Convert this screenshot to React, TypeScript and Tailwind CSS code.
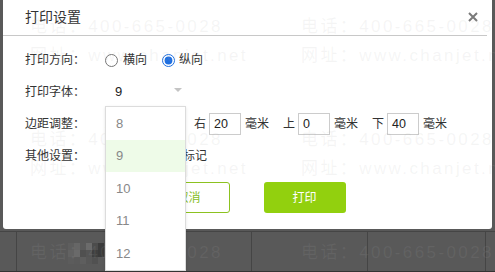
import React from "react";

const FONT = { fontFamily: '"Liberation Sans", "Noto Sans CJK SC", sans-serif' };

const mosaic = [
  ["#5e5e5e", "#666666", "#5a5a5a", "#6b6b6b", "#4c4c4c", "#3c3c3c"],
  ["#626262", "#6a6a6a", "#505050", "#555555", "#3f3f3f", "#3a3a3a"],
  ["#5c5c5c", "#5a5a5a", "#5e5e5e", "#575757", "#515151", "#5a5a5a"],
];

function Watermark() {
  const rows = [0, 1, 2];
  const cols = [0, 1];
  return (
    <div className="pointer-events-none absolute inset-0 flex flex-col gap-[58px] pt-[14px] pl-[30px] text-[17px] tracking-[2.4px] text-[rgba(171,171,171,0.12)] leading-[26px]" style={FONT}>
      {rows.map((r) => (
        <div key={r} className="flex gap-[66px]">
          {cols.map((c) => (
            <div key={c} className="flex w-[205px] shrink-0 flex-col gap-[3px] whitespace-nowrap">
              <span>电话：400-665-0028</span>
              <span>网址：www.chanjet.net</span>
            </div>
          ))}
        </div>
      ))}
    </div>
  );
}

function MarginInput({ label, value }: { label: string; value: string }) {
  return (
    <div className="flex items-center">
      <span>{label}</span>
      <div className="ml-[3px] flex h-[22px] w-[32px] items-center border border-[#cccccc] pl-[4px] text-[12.5px] text-[#222]">
        {value}
      </div>
      <span className="ml-[4px]">毫米</span>
    </div>
  );
}

export default function App() {
  return (
    <div className="relative flex h-[272px] w-[495px] flex-col overflow-hidden border-b border-[#333] bg-[#595959]" style={FONT}>
      <div className="relative ml-[3px] mr-[3px] h-[229px] shrink-0 rounded-b-[3px] bg-white text-[12px] text-[#333]">
        <div className="mr-[5px] flex h-[36px] items-center justify-between border-b border-[#c8c8c8] pl-[22px] pr-[9px]">
          <span className="text-[14px] text-[#333]">打印设置</span>
          <svg width="10" height="10" viewBox="0 0 10 10" className="mb-[1px]">
            <path d="M1 1 L9 9 M9 1 L1 9" stroke="#7a7a7a" strokeWidth="2" />
          </svg>
        </div>

        <div className="flex flex-col pt-[8px] pl-[22px]">
          <div className="flex h-[32px] items-center">
            <span className="w-[80px]">打印方向：</span>
            <label className="flex items-center">
              <input type="radio" name="dir" className="m-0 h-[13px] w-[13px]" />
              <span className="ml-[5px]">横向</span>
            </label>
            <label className="ml-[15px] flex items-center">
              <input type="radio" name="dir" defaultChecked className="m-0 h-[13px] w-[13px] accent-[#1f6fe0]" />
              <span className="ml-[4px]">纵向</span>
            </label>
          </div>

          <div className="flex h-[32px] items-center">
            <span className="w-[80px]">打印字体：</span>
            <div className="relative flex h-[32px] w-[81px] items-center justify-between pl-[10px] pr-[4px]">
              <span className="text-[13px] text-[#222]">9</span>
              <svg width="8" height="5" viewBox="0 0 8 5" className="mt-[-3px]">
                <path d="M0 0 L8 0 L4 4 Z" fill="#c4c4c4" />
              </svg>
              <div className="absolute left-0 top-[30px] z-10 flex w-[81px] flex-col border border-[#dcdcdc] bg-white text-[13px] text-[#888] shadow-sm">
                {["8", "9", "10", "11", "12"].map((v) => (
                  <div key={v} className={`flex h-[32.5px] items-center pl-[10px] ${v === "9" ? "bg-[#eefbe8]" : ""}`}>
                    {v}
                  </div>
                ))}
              </div>
            </div>
          </div>

          <div className="flex h-[32px] items-center">
            <span className="w-[80px]">边距调整：</span>
            <div className="flex items-center gap-[14px]">
              <MarginInput label="左" value="20" />
              <MarginInput label="右" value="20" />
              <MarginInput label="上" value="0" />
              <MarginInput label="下" value="40" />
            </div>
          </div>

          <div className="flex h-[32px] items-center">
            <span className="w-[80px]">其他设置：</span>
            <input type="checkbox" className="m-0 h-[13px] w-[13px]" />
            <span className="ml-[17px]">打印凭证标记</span>
          </div>
        </div>

        <div className="mt-[10px] flex justify-center gap-[34px] pr-[2px]">
          <button className="h-[31px] w-[82px] rounded-[3px] border border-[#8cc220] bg-white text-[12px] text-[#86bd1c]">
            取消
          </button>
          <button className="h-[31px] w-[82px] rounded-[3px] bg-[#92d00e] text-[12px] text-white">
            打印
          </button>
        </div>
      </div>

      <div className="mt-[2px] flex flex-1 border-t border-[#454545]">
        <div className="w-[16px] shrink-0" />
        <div className="flex w-[235px] shrink-0 border-l border-[#454545] pl-[51px] pt-[11px]">
          <div className="flex flex-col">
            {mosaic.map((row, i) => (
              <div key={i} className="flex">
                {row.map((c, j) => (
                  <div key={j} className="h-[7px] w-[6px]" style={{ backgroundColor: c }} />
                ))}
              </div>
            ))}
          </div>
        </div>
        <div className="w-[116px] shrink-0 border-l border-[#454545]" />
        <div className="w-[118px] shrink-0 border-l border-[#454545]" />
        <div className="flex-1 border-l border-[#454545]" />
      </div>

      <Watermark />
    </div>
  );
}
